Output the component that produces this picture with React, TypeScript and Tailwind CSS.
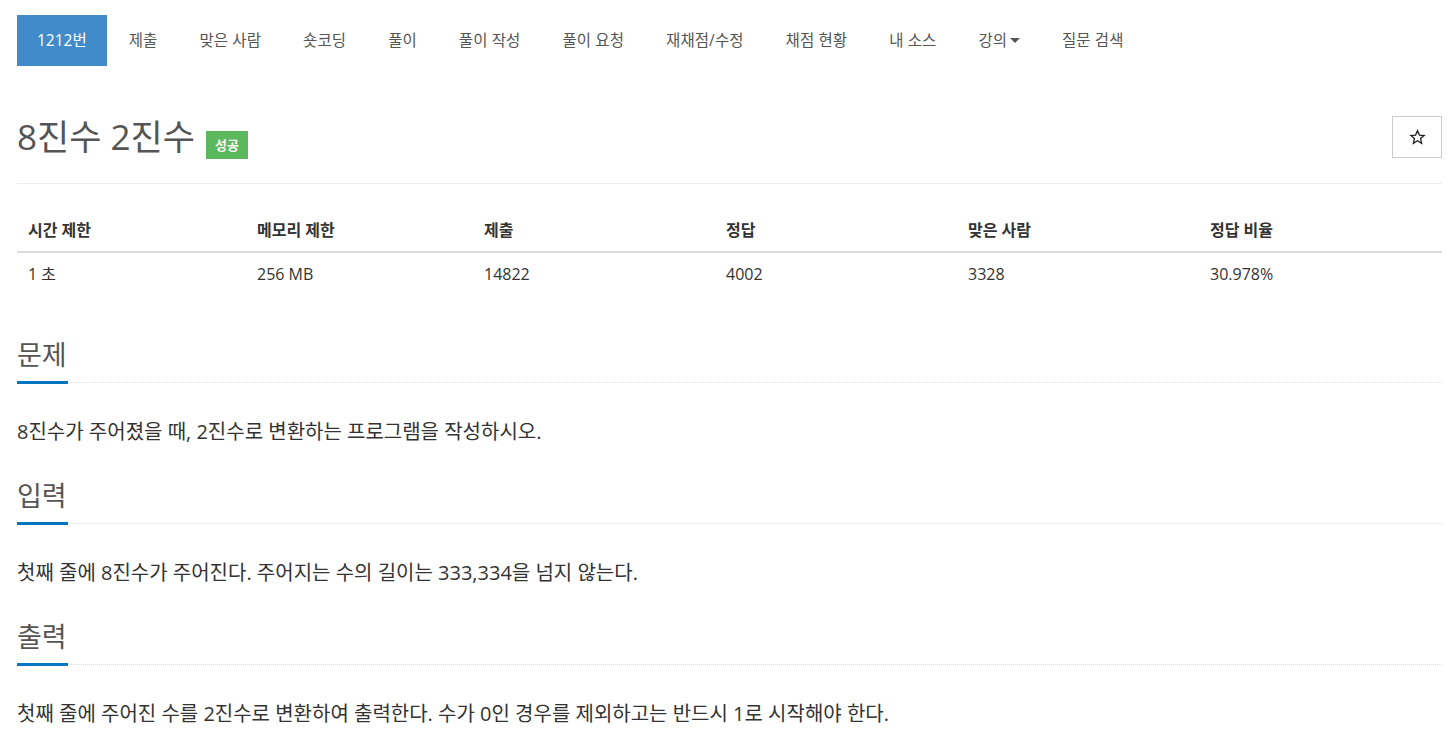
const tabs = [
  "제출",
  "맞은 사람",
  "숏코딩",
  "풀이",
  "풀이 작성",
  "풀이 요청",
  "재채점/수정",
  "채점 현황",
  "내 소스",
]

const heads = ["시간 제한", "메모리 제한", "제출", "정답", "맞은 사람", "정답 비율"]
const values = ["1 초", "256 MB", "14822", "4002", "3328", "30.978%"]

const sections = [
  { title: "문제", body: "8진수가 주어졌을 때, 2진수로 변환하는 프로그램을 작성하시오." },
  { title: "입력", body: "첫째 줄에 8진수가 주어진다. 주어지는 수의 길이는 333,334을 넘지 않는다." },
  {
    title: "출력",
    body: "첫째 줄에 주어진 수를 2진수로 변환하여 출력한다. 수가 0인 경우를 제외하고는 반드시 1로 시작해야 한다.",
  },
]

function Section({ title, body, first }: { title: string; body: string; first: boolean }) {
  return (
    <div className={first ? "mt-[50px]" : "mt-[38px]"}>
      <h2 className="border-b border-dotted border-[#ddd] text-[27px] leading-[26px] font-normal text-[#555]">
        <span className="-mb-[2px] inline-block w-[51px] border-b-[3px] border-[#0076c0] pb-[13px] whitespace-nowrap">
          {title}
        </span>
      </h2>
      <p className="mt-[35px] text-[20px] leading-[27px] text-[#333]">{body}</p>
    </div>
  )
}

export default function App() {
  return (
    <div
      className="w-[1454px] min-h-[747px] bg-white pl-[17px] pr-[12px] pt-[15px]"
      style={{ fontFamily: '"Open Sans", "Noto Sans CJK KR", sans-serif' }}
    >
      {/* problem menu */}
      <ul className="flex text-[15.5px] leading-[21px] text-[#555]">
        <li className="bg-[#428bca] px-5 py-[15px] text-white">1212번</li>
        {tabs.map((t) => (
          <li key={t} className="ml-[2px] px-5 py-[15px] tracking-[0.1px]">
            {t}
          </li>
        ))}
        <li className="ml-[2px] flex items-center px-5 py-[15px]">
          강의
          <span className="ml-[3px] inline-block h-0 w-0 border-x-[5px] border-t-[5px] border-x-transparent border-t-[#555]" />
        </li>
        <li className="ml-[2px] px-5 py-[15px] tracking-[0.1px]">질문 검색</li>
      </ul>

      {/* title */}
      <div className="mt-[50px] flex items-center justify-between border-b border-[#eee] pb-[25px]">
        <h1 className="flex items-center text-[35px] leading-[40px] font-normal text-[#555]">
          <span>8진수 2진수</span>
          <span className="ml-[11px] h-[28px] translate-y-[8px] bg-[#5cb85c] px-[9px] text-[13px] leading-[28px] font-bold text-white">
            성공
          </span>
        </h1>
        <button className="flex h-[42px] w-[50px] items-center justify-center border border-[#ccc] bg-white">
          <svg width="17" height="16" viewBox="0 0 24 24" fill="none" stroke="#222" strokeWidth="2" strokeLinejoin="miter">
            <path d="M12 2.5l2.9 6.6 7.1.6-5.4 4.7 1.6 7-6.2-3.7-6.2 3.7 1.6-7L2 9.7l7.1-.6z" />
          </svg>
        </button>
      </div>

      {/* info table */}
      <div className="mt-[31px] text-[16px] leading-[20px] text-[#333]">
        <div className="grid grid-cols-[229px_227px_242px_242px_242px_1fr] border-b-2 border-[#ddd] font-bold">
          {heads.map((h) => (
            <div key={h} className="pt-[5px] pb-[11px] pl-[11px]">
              {h}
            </div>
          ))}
        </div>
        <div className="grid grid-cols-[229px_227px_242px_242px_242px_1fr]">
          {values.map((v) => (
            <div key={v} className="pt-[11px] pb-[8px] pl-[11px]">
              {v}
            </div>
          ))}
        </div>
      </div>

      {sections.map((s, i) => (
        <Section key={s.title} title={s.title} body={s.body} first={i === 0} />
      ))}
    </div>
  )
}
